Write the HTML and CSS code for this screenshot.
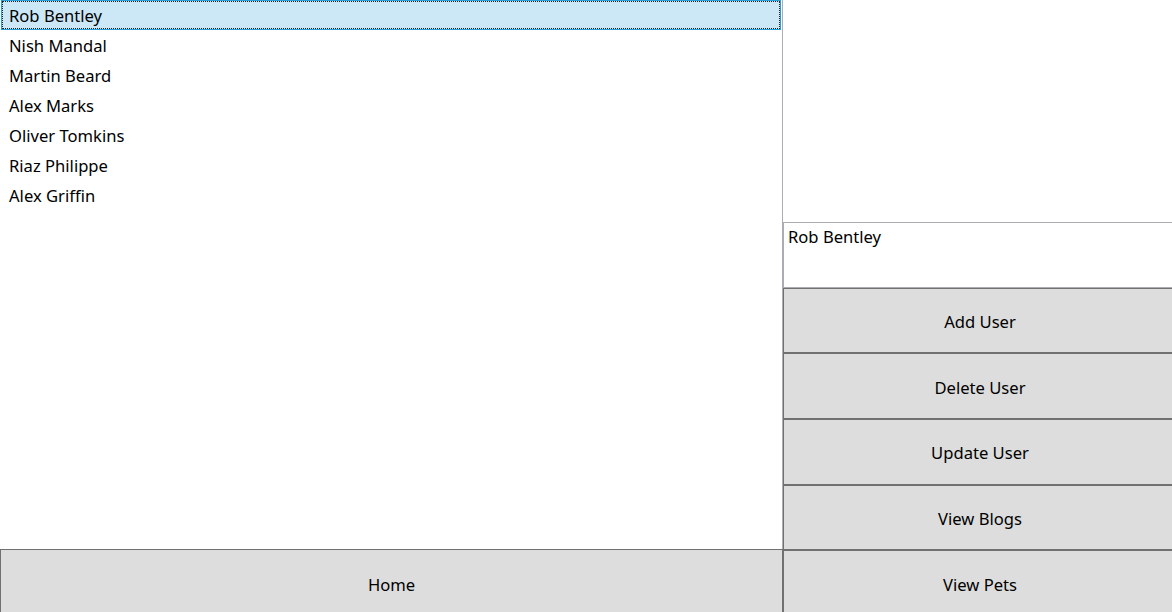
FILE: index.html
```html
<!DOCTYPE html>
<html>
<head>
<meta charset="utf-8">
<link rel="stylesheet" href="styles.css">
</head>
<body>
<div class="app">
  <div class="left">
    <div class="list">
      <div class="item selected"><span class="focus">Rob Bentley</span></div>
      <div class="item">Nish Mandal</div>
      <div class="item">Martin Beard</div>
      <div class="item">Alex Marks</div>
      <div class="item">Oliver Tomkins</div>
      <div class="item">Riaz Philippe</div>
      <div class="item">Alex Griffin</div>
    </div>
    <button class="btn home">Home</button>
  </div>
  <div class="right">
    <div class="spacer"></div>
    <div class="textbox">Rob Bentley</div>
    <button class="btn b65">Add User</button>
    <button class="btn b66">Delete User</button>
    <button class="btn b66 up">Update User</button>
    <button class="btn b65">View Blogs</button>
    <button class="btn b66">View Pets</button>
  </div>
</div>
</body>
</html>
```

FILE: styles.css
```css
html, body {
  margin: 0;
  padding: 0;
  background: #ffffff;
  overflow: hidden;
}
body {
  font-family: "Noto Sans", "Segoe UI", sans-serif;
  font-size: 16.6px;
  color: #000000;
}
.app {
  display: flex;
  width: 1172px;
  height: 612px;
  overflow: hidden;
}
.left {
  width: 783px;
  flex: none;
  display: flex;
  flex-direction: column;
}
.list {
  height: 549px;
  box-sizing: border-box;
  border-right: 1px solid #abadb3;
  padding: 0 1px 0 1px;
  flex: none;
}
.item {
  height: 30px;
  line-height: 32px;
  padding-left: 8px;
  box-sizing: border-box;
  white-space: nowrap;
}
.item.selected {
  background: #cce8f7;
  border: 1px solid #26a0da;
  padding: 0;
  height: 30px;
  line-height: 28px;
}
.item.selected .focus {
  display: block;
  height: 100%;
  box-sizing: border-box;
  border: 1px dotted #222222;
  padding-left: 6px;
}
.btn {
  font: inherit;
  color: #000000;
  background: #dddddd;
  border: 1px solid #707070;
  box-sizing: border-box;
  margin: 0;
  padding: 2px 0 0 0;
  display: flex;
  align-items: center;
  justify-content: center;
  flex: none;
  width: 100%;
}
.btn.up {
  padding-top: 0;
}
.home {
  height: 68px;
}
.right {
  width: 394px;
  flex: none;
  display: flex;
  flex-direction: column;
}
.spacer {
  height: 222px;
  flex: none;
}
.textbox {
  height: 66px;
  flex: none;
  box-sizing: border-box;
  border: 1px solid #abadb3;
  border-right: none;
  padding: 1px 4px;
  line-height: 26px;
}
.b65 {
  height: 65px;
}
.b66 {
  height: 66px;
}
```
